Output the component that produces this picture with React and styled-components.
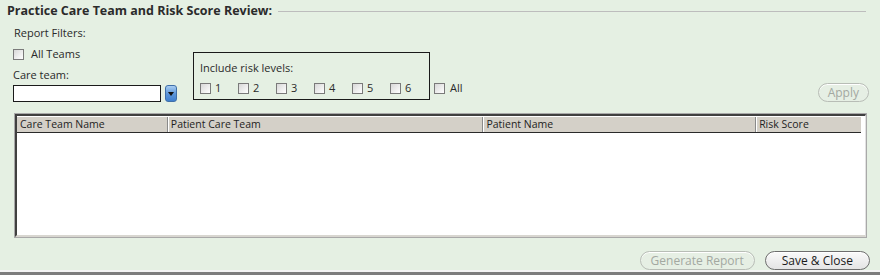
import styled, { createGlobalStyle } from "styled-components";

const Global = createGlobalStyle`
  html, body {
    margin: 0;
    padding: 0;
    background: #e5f0e3;
  }
  body {
    font-family: "Open Sans", "Noto Sans", "DejaVu Sans", sans-serif;
    color: #1e1e1e;
  }
`

const Panel = styled.div`
  width: 880px;
  height: 275px;
  box-sizing: border-box;
  background: #e5f0e3;
  border-bottom: 3px solid #7d7d7d;
  box-shadow: inset 0 -2px 0 #f4f4f4;
  padding: 2px 0 0 0;
  display: flex;
  flex-direction: column;
`

const TitleRow = styled.div`
  display: flex;
  align-items: center;
  height: 16px;
  padding-left: 7px;
  padding-right: 14px;
`

const Title = styled.div`
  font-size: 12.5px;
  font-weight: 700;
  color: #2b2b2b;
  white-space: nowrap;
`

const Rule = styled.div`
  flex: 1;
  height: 1px;
  margin-left: 6px;
  margin-top: 2px;
  background: #bdbdbd;
`

const Filters = styled.div`
  display: flex;
  align-items: flex-start;
  padding: 8px 11px 0 13px;
  height: 95px;
  box-sizing: border-box;
`

const LeftCol = styled.div`
  display: flex;
  flex-direction: column;
  width: 180px;
`

const Label = styled.div`
  font-size: 11px;
  line-height: 14px;
  height: ${(p) => p.h || "14px"};
  padding-left: ${(p) => p.indent || "0"};
  padding-top: ${(p) => p.pt || "0"};
  box-sizing: border-box;
  color: #2a2a2a;
`

const Check = styled.label`
  display: inline-flex;
  align-items: center;
  gap: ${(p) => p.gap || "7px"};
  font-size: 11px;
  line-height: 14px;
  color: #2a2a2a;
  width: ${(p) => p.w || "auto"};
  height: ${(p) => p.h || "14px"};
  flex-shrink: 0;
`

const Box = styled.span`
  width: 9px;
  height: 9px;
  border: 1px solid #7a7a7a;
  background: linear-gradient(135deg, #d8d8d8, #ffffff);
  display: inline-block;
`

const InputRow = styled.div`
  display: flex;
  align-items: center;
  gap: 4px;
`

const Input = styled.div`
  width: 146px;
  height: 15px;
  border: 1px solid #1a1a1a;
  background: #fff;
`

const DropBtn = styled.div`
  width: 12px;
  height: 17px;
  border-radius: 3px;
  border: 1px solid #3f6fa8;
  background: linear-gradient(#a9cdf2, #5f98d9 50%, #3e7fcf);
  display: flex;
  align-items: center;
  justify-content: center;
  box-sizing: border-box;
  &::after {
    content: "";
    border-left: 3px solid transparent;
    border-right: 3px solid transparent;
    border-top: 4px solid #111;
  }
`

const RiskBox = styled.div`
  margin-top: 26px;
  width: 237px;
  height: 48px;
  border: 1px solid #1a1a1a;
  padding: 8px 0 0 6px;
  box-sizing: border-box;
`

const RiskRow = styled.div`
  display: flex;
  margin-top: 6px;
`

const AllCheck = styled.div`
  display: flex;
  margin-top: 55px;
  margin-left: 4px;
`

const Spacer = styled.div`
  flex: 1;
`

const Pill = styled.button`
  font-family: inherit;
  font-size: 12px;
  height: 19px;
  padding: 0 ${(p) => p.px || "9px"};
  border-radius: 10px;
  border: 1px solid ${(p) => (p.disabled ? "#b8bdb6" : "#6d6d6d")};
  background: ${(p) => (p.disabled ? "#e6efe4" : "linear-gradient(#fafafa, #e4e4e4)")};
  color: ${(p) => (p.disabled ? "#a3a8a1" : "#1a1a1a")};
  line-height: 16px;
  box-shadow: inset 0 1px 0 #ffffff;
`

const ApplyWrap = styled.div`
  display: flex;
  margin-top: 57px;
`

const Table = styled.div`
  margin: 0 13px 0 14px;
  height: 125px;
  border: 1px solid #a9a9a9;
  background: #fff;
  box-sizing: border-box;
  display: flex;
  flex-direction: column;
`

const TableInner = styled.div`
  flex: 1;
  border-top: 2px solid #404040;
  border-left: 2px solid #404040;
  border-right: 1px solid #e2e2e2;
  border-bottom: 2px solid #d8d6d0;
  padding-right: 4px;
`

const Header = styled.div`
  display: flex;
  height: 15px;
  background: #d4d0c8;
  border-bottom: 1px solid #2a2a2a;
  border-top: 1px solid #ffffff;
`

const HeadCell = styled.div`
  width: ${(p) => p.w};
  box-sizing: border-box;
  font-size: 10.5px;
  line-height: 14px;
  padding-left: 3px;
  color: #1e1e1e;
  border-left: ${(p) => (p.first ? "none" : "1px solid #8a8a8a")};
  box-shadow: ${(p) => (p.first ? "none" : "inset 1px 0 0 #ffffff")};
  white-space: nowrap;
  overflow: hidden;
`

const Footer = styled.div`
  display: flex;
  justify-content: flex-end;
  gap: 10px;
  padding: 13px 10px 0 0;
`

const riskLevels = ["1", "2", "3", "4", "5", "6"];

const columns = [
  { name: "Care Team Name", w: "150px" },
  { name: "Patient Care Team", w: "316px" },
  { name: "Patient Name", w: "273px" },
  { name: "Risk Score", w: "106px" },
];

const App = () => {
  return (
    <>
      <Global />
      <Panel>
        <TitleRow>
          <Title>Practice Care Team and Risk Score Review:</Title>
          <Rule />
        </TitleRow>
        <Filters>
          <LeftCol>
            <Label h="17px" indent="1px">Report Filters:</Label>
            <Check h="22px">
              <Box /> All Teams
            </Check>
            <Label h="20px" pt="3px">Care team:</Label>
            <InputRow>
              <Input />
              <DropBtn />
            </InputRow>
          </LeftCol>
          <RiskBox>
            <Label>Include risk levels:</Label>
            <RiskRow>
              {riskLevels.map((r) => (
                <Check key={r} w="38px" gap="4px">
                  <Box /> {r}
                </Check>
              ))}
            </RiskRow>
          </RiskBox>
          <AllCheck>
            <Check gap="5px">
              <Box /> All
            </Check>
          </AllCheck>
          <Spacer />
          <ApplyWrap>
            <Pill disabled>Apply</Pill>
          </ApplyWrap>
        </Filters>
        <Table>
          <TableInner>
            <Header>
              {columns.map((c, i) => (
                <HeadCell key={c.name} w={c.w} first={i === 0}>
                  {c.name}
                </HeadCell>
              ))}
            </Header>
          </TableInner>
        </Table>
        <Footer>
          <Pill disabled px="10px">Generate Report</Pill>
          <Pill px="16px">Save &amp; Close</Pill>
        </Footer>
      </Panel>
    </>
  )
}

export default App;
